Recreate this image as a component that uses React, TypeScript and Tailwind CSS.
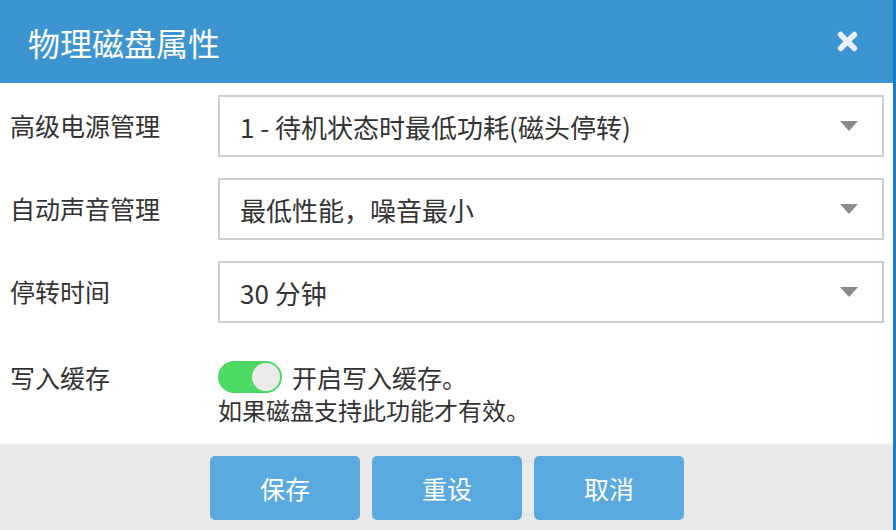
import React from 'react';

const font = { fontFamily: '"Noto Sans CJK SC", "Noto Sans", sans-serif' };

const Caret = () => (
  <svg width="18" height="10" viewBox="0 0 18 10" className="shrink-0">
    <path d="M0 0 H18 L9 10 Z" fill="#8a8a8a" />
  </svg>
);

const SelectRow: React.FC<{ label: string; value: string }> = ({ label, value }) => (
  <div className="flex items-center">
    <div className="w-[218px] pl-[10px] text-[25px] text-[#333]">{label}</div>
    <div className="flex h-[62px] w-[666px] items-center justify-between border-2 border-[#cfcfcf] bg-white pl-[20px] pr-[24px]">
      <span className="text-[26px] text-[#333]">{value}</span>
      <Caret />
    </div>
  </div>
);

export default function App() {
  const [cache, setCache] = React.useState(true);
  return (
    <div className="flex h-[530px] w-[896px] overflow-hidden bg-white" style={font}>
      <div className="flex flex-1 flex-col">
        <div className="flex h-[83px] items-center justify-between bg-[#3c94d0] pl-[28px] pr-[35px]">
          <h1 className="text-[32px] font-normal text-white">物理磁盘属性</h1>
          <svg width="21" height="21" viewBox="0 0 20 20">
            <path d="M3.5 3.5 L16.5 16.5 M16.5 3.5 L3.5 16.5" stroke="#e8f1f9" strokeWidth="5.5" strokeLinecap="round" />
          </svg>
        </div>
        <div className="flex flex-1 flex-col pt-[12px]">
          <div className="flex flex-col gap-[21px]">
            <SelectRow label="高级电源管理" value="1 - 待机状态时最低功耗(磁头停转)" />
            <SelectRow label="自动声音管理" value="最低性能，噪音最小" />
            <SelectRow label="停转时间" value="30 分钟" />
          </div>
          <div className="mt-[37px] flex">
            <div className="w-[218px] pl-[10px] text-[25px] leading-[34px] text-[#333]">写入缓存</div>
            <div className="flex flex-col">
              <div className="flex items-center gap-[10px]">
                <button
                  onClick={() => setCache(!cache)}
                  className={`flex h-[32px] w-[64px] items-center rounded-full p-[2px] ${cache ? 'justify-end bg-[#4cd964]' : 'justify-start bg-[#ddd]'}`}
                >
                  <span className="h-[28px] w-[28px] rounded-full bg-[#ebebeb]" />
                </button>
                <span className="text-[25px] leading-[34px] text-[#333]">开启写入缓存。</span>
              </div>
              <span className="text-[24px] leading-[32px] text-[#333]">如果磁盘支持此功能才有效。</span>
            </div>
          </div>
        </div>
        <div className="flex h-[87px] gap-[12px] border-t-2 border-[#f3f3f3] bg-[#e9e9e9] pl-[210px] pt-[11px]">
          {['保存', '重设', '取消'].map((t) => (
            <button key={t} className="h-[64px] w-[150px] rounded-[5px] bg-[#5aaae0] text-[25px] leading-none text-white">
              {t}
            </button>
          ))}
        </div>
      </div>
      <div className="w-[3px] bg-[#1c7bc6]" />
    </div>
  );
}
